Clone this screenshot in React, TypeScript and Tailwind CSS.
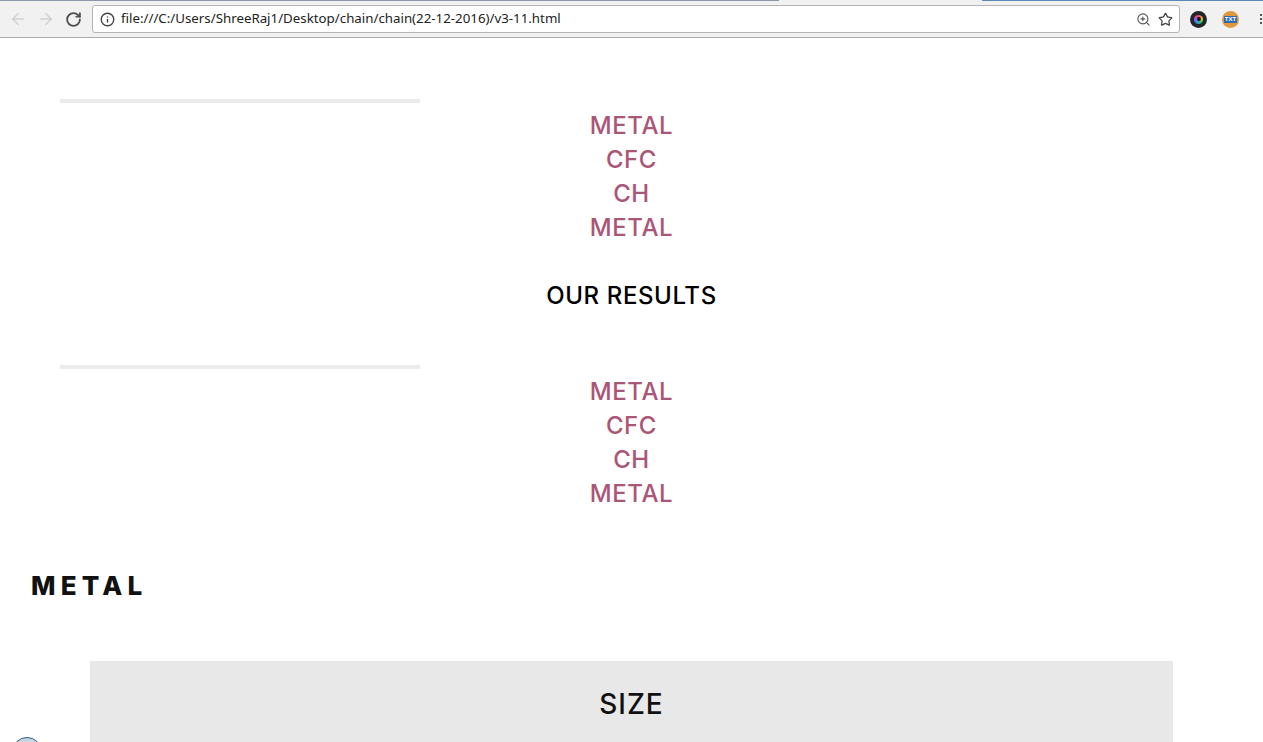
import { ArrowLeft, ArrowRight, Info, RotateCw, Star, ZoomIn } from "lucide-react";

const items = ["METAL", "CFC", "CH", "METAL"];

function BrowserBar() {
  return (
    <div className="h-[38px] shrink-0 bg-[#f1f1f1] border-b border-[#a9a9a9] flex flex-col overflow-hidden">
      {/* Tab strip remains */}
      <div className="h-px flex shrink-0">
        <div className="w-[779px] bg-[#8b98a8]" />
        <div className="w-[203px] bg-[#f1f1f1]" />
        <div className="flex-1 bg-[#5a86b8]" />
      </div>
      <div className="flex-1 flex items-center pl-[9px]">
        <ArrowLeft className="w-[18px] h-[18px] text-[#d0d0d0]" strokeWidth={2} />
        <ArrowRight className="w-[18px] h-[18px] ml-[10px] text-[#d0d0d0]" strokeWidth={2} />
        <RotateCw className="w-[17px] h-[17px] ml-[10px] text-[#505050]" strokeWidth={2.6} />
        <div className="ml-[10px] w-[1088px] h-[28px] bg-white border border-[#b4b4b4] rounded-[3px] flex items-center pl-[7px] pr-[6px]">
          <Info className="w-[15px] h-[15px] text-[#444]" strokeWidth={2.2} />
          <span className="ml-[6px] text-[13.3px] text-[#222] font-['Noto_Sans',sans-serif] flex-1">
            file:///C:/Users/ShreeRaj1/Desktop/chain/chain(22-12-2016)/v3-11.html
          </span>
          <ZoomIn className="w-[15px] h-[15px] text-[#555]" strokeWidth={1.8} />
          <Star className="w-[15px] h-[15px] ml-[7px] text-[#444]" strokeWidth={2} />
        </div>
        <div className="ml-[10px] w-[17px] h-[17px] rounded-full bg-[#22262b] flex items-center justify-center">
          <div className="w-[9px] h-[9px] rounded-full bg-[conic-gradient(#f43f5e,#facc15,#22c55e,#3b82f6,#a855f7,#f43f5e)] flex items-center justify-center">
            <div className="w-[4px] h-[4px] rounded-full bg-[#111]" />
          </div>
        </div>
        <div className="ml-[15px] w-[17px] h-[17px] rounded-full bg-[#e0983c] flex items-center justify-center">
          <span className="px-px bg-[#2f6cb0] text-white text-[6px] leading-[7px] font-bold font-['Liberation_Sans',sans-serif]">TXT</span>
        </div>
        <div className="ml-[21px] flex flex-col gap-[2px]">
          <div className="w-[2px] h-[2px] bg-[#555]" />
          <div className="w-[2px] h-[2px] bg-[#555]" />
          <div className="w-[2px] h-[2px] bg-[#555]" />
        </div>
      </div>
    </div>
  );
}

function Block() {
  return (
    <div>
      <div className="ml-[60px] w-[360px] h-1 bg-[#ebebeb]" />
      <ul className="mt-[6px] text-center text-[24px] leading-[34px] text-[#ab5577] font-medium tracking-[0.6px]">
        {items.map((item, i) => (
          <li key={i}>{item}</li>
        ))}
      </ul>
    </div>
  );
}

export default function App() {
  return (
    <div className="w-[1263px] h-[742px] overflow-hidden bg-white relative flex flex-col font-['Inter','Noto_Sans',sans-serif]">
      <BrowserBar />
      <div className="pt-[61px]">
        <Block />
        <h2 className="mt-[34px] text-center text-[24px] leading-[34px] text-black font-medium tracking-[0.6px]">
          OUR RESULTS
        </h2>
        <div className="mt-[52px]">
          <Block />
        </div>
        <h1 className="mt-[57px] ml-[31px] text-[26px] leading-[36px] font-extrabold text-[#111] tracking-[5.2px]">
          METAL
        </h1>
        <div className="mt-[57px] mx-[90px] h-[100px] bg-[#e8e8e8] pt-[25px] text-center text-[28px] leading-[36px] font-medium text-[#111] tracking-[1px]">
          SIZE
        </div>
      </div>
      {/* Floating widget peeking in at the bottom edge */}
      <div className="absolute left-[12px] top-[737px] w-[30px] h-[30px] rounded-full border border-[#2f5f85] bg-[#c9d6e0]" />
    </div>
  );
}
